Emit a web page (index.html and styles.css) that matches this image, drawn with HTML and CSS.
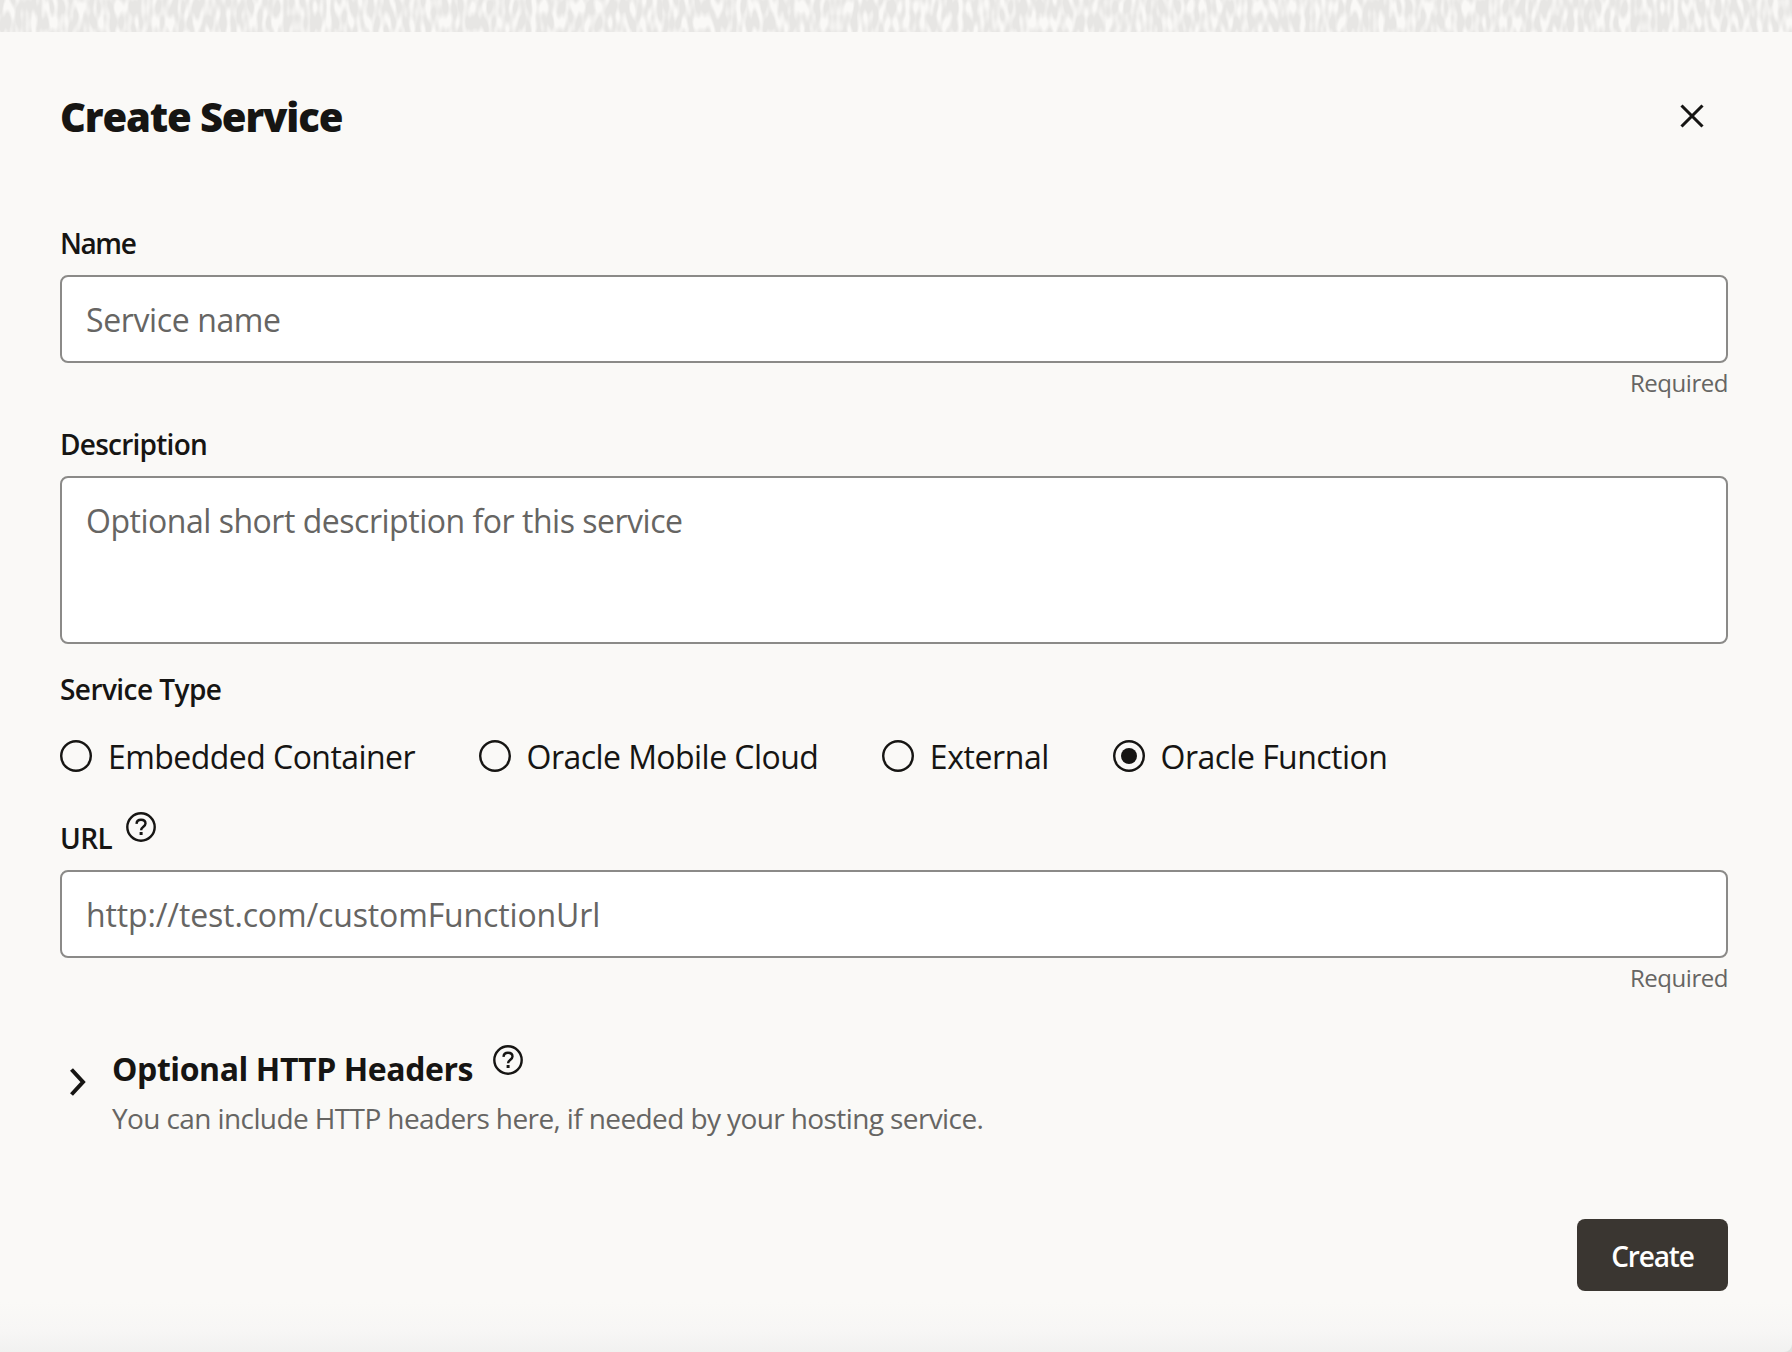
FILE: index.html
```html
<!DOCTYPE html>
<html lang="en">
<head>
<meta charset="utf-8">
<title>Create Service</title>
<link rel="stylesheet" href="styles.css">
</head>
<body>
<svg class="texture" width="1792" height="32" aria-hidden="true">
  <filter id="weave" x="0" y="0" width="100%" height="100%" color-interpolation-filters="sRGB">
    <feTurbulence type="fractalNoise" baseFrequency="0.19 0.065" numOctaves="1" seed="11"/>
    <feColorMatrix values="0 0 0 0 0.906  0 0 0 0 0.902  0 0 0 0 0.894  4 0 0 0 -1.35"/>
  </filter>
  <rect width="1792" height="32" filter="url(#weave)"/>
</svg>
<main class="dialog">
  <header class="dialog-header">
    <h1 class="title">Create Service</h1>
    <button class="close" type="button" aria-label="Close">
      <svg width="24" height="24" viewBox="0 0 24 24"><path d="M1.500 1.500 22.500 22.500M22.500 1.500 1.500 22.500" fill="none" stroke="currentColor" stroke-width="3.100"/></svg>
    </button>
  </header>
  <form class="form">
    <label class="label name-label" for="name">Name</label>
    <input class="field name-field" id="name" placeholder="Service name">
    <div class="hint">Required</div>

    <label class="label" for="description">Description</label>
    <textarea class="field area" id="description" placeholder="Optional short description for this service"></textarea>

    <div class="label type-label">Service Type</div>
    <div class="radios">
      <label class="radio"><span class="dot"></span><span>Embedded Container</span></label>
      <label class="radio"><span class="dot"></span><span>Oracle Mobile Cloud</span></label>
      <label class="radio external"><span class="dot"></span><span>External</span></label>
      <label class="radio"><span class="dot checked"></span><span>Oracle Function</span></label>
    </div>

    <div class="url-row">
      <label class="label url-label" for="url">URL</label>
      <svg class="help" width="30" height="30" viewBox="0 0 30 30"><circle cx="15" cy="15" r="13.7" fill="none" stroke="currentColor" stroke-width="2.4"/><path d="M10.500 11.800C10.700 9.200 12.400 7.800 15 7.800c2.700 0 4.500 1.500 4.500 3.700 0 3.200-4.400 3.200-4.400 6.700" fill="none" stroke="currentColor" stroke-width="2.400"/><path d="M13.600 20h3v3h-3z" fill="currentColor"/></svg>
    </div>
    <input class="field url-field" id="url" placeholder="http://test.com/customFunctionUrl">
    <div class="hint">Required</div>

    <section class="headers">
      <svg class="chevron" width="18" height="28" viewBox="0 0 18 28"><path d="M1.500 1.500 13 14 1.500 26.500" fill="none" stroke="currentColor" stroke-width="4"/></svg>
      <div class="headers-body">
        <div class="headers-top">
          <h2 class="headers-title">Optional HTTP Headers</h2>
          <svg class="help" width="30" height="30" viewBox="0 0 30 30"><circle cx="15" cy="15" r="13.7" fill="none" stroke="currentColor" stroke-width="2.4"/><path d="M10.500 11.800C10.700 9.200 12.400 7.800 15 7.800c2.700 0 4.500 1.500 4.500 3.700 0 3.200-4.400 3.200-4.400 6.700" fill="none" stroke="currentColor" stroke-width="2.400"/><path d="M13.600 20h3v3h-3z" fill="currentColor"/></svg>
        </div>
        <p class="headers-text">You can include HTTP headers here, if needed by your hosting service.</p>
      </div>
    </section>

    <div class="actions"><button class="create" type="button">Create</button></div>
  </form>
</main>
</body>
</html>
```
FILE: styles.css
```css
* { box-sizing: border-box; }
body {
  margin: 0;
  height: 1352px;
  overflow: hidden;
  display: flex;
  flex-direction: column;
  background: #e0e0df;
  color: #161513;
  font-family: "Open Sans", "Noto Sans", sans-serif;
}
.texture { display: block; flex: none; background: #faf9f7; }
.dialog {
  flex: 1;
  padding: 61px 64px 0 60px;
  border-bottom-right-radius: 8px;
  background: linear-gradient(#faf9f7 0, #faf9f7 1270px, #f7f6f5 1300px, #f1f1f0 1320px);
}
.dialog-header { display: flex; justify-content: space-between; height: 48px; }
.title { margin: 0; font-size: 40px; line-height: 48px; font-weight: 800; letter-spacing: -1.14px; }
.close { width: 24px; height: 24px; margin: 11px 24px 0 0; padding: 0; border: 0; background: none; color: inherit; }
.close svg { display: block; }
.form { display: flex; flex-direction: column; margin-top: 86px; }
.label { margin-top: 31px; font-size: 28px; line-height: 32px; font-weight: 600; letter-spacing: -0.75px; }
.name-label { margin-top: 0; letter-spacing: -1.4px; }
.type-label { margin-top: 29px; letter-spacing: -0.56px; }
.url-label { margin: 0 0 -1px; letter-spacing: -0.59px; }
.field {
  display: block;
  width: 100%;
  height: 88px;
  margin-top: 16px;
  padding: 0 24px;
  border: 2px solid #8b8a88;
  border-radius: 8px;
  outline: 0;
  background: #fff;
  font: 400 32px/40px "Open Sans", "Noto Sans", sans-serif;
  resize: none;
}
.field::placeholder { color: #666563; opacity: 1; }
.name-field { letter-spacing: -0.38px; }
.area { height: 168px; padding-top: 23px; letter-spacing: -0.48px; }
.url-field { margin-top: 17px; letter-spacing: -0.14px; }
.hint { margin-top: 6px; text-align: right; font-size: 24px; line-height: 28px; letter-spacing: -0.45px; color: #666563; }
.radios { display: flex; gap: 63.5px; margin-top: 32px; }
.radio { display: flex; gap: 16px; font-size: 32px; line-height: 40px; letter-spacing: -0.55px; }
.external { letter-spacing: -0.4px; }
.dot { flex: none; display: grid; place-items: center; width: 32px; height: 32px; margin-top: 3px; border-radius: 50%; box-shadow: inset 0 0 0 2.4px #161513; }
.checked::after { content: ""; width: 16px; height: 16px; border-radius: 50%; background: #161513; }
.url-row { display: flex; align-items: flex-end; gap: 14px; height: 42px; margin-top: 34px; }
.help { display: block; flex: none; align-self: flex-start; margin-top: 1px; }
.headers { display: flex; margin: 57px 0 0 10px; }
.chevron { display: block; flex: none; margin: 19px 24px 0 0; }
.headers-top { display: flex; gap: 20px; height: 40px; }
.headers-top .help { margin-top: -4px; }
.headers-title { margin: 0; font-size: 32px; line-height: 40px; font-weight: 700; letter-spacing: -0.42px; }
.headers-text { margin: 13px 0 0; font-size: 28px; line-height: 32px; letter-spacing: -0.603px; color: #666563; }
.actions { display: flex; justify-content: flex-end; margin-top: 85px; }
.create {
  width: 151px;
  height: 72px;
  padding: 1px 0 0;
  border: 0;
  border-radius: 8px;
  background: #3a3631;
  color: #fff;
  font: 600 28px/32px "Open Sans", "Noto Sans", sans-serif;
  letter-spacing: -1.15px;
}
```
